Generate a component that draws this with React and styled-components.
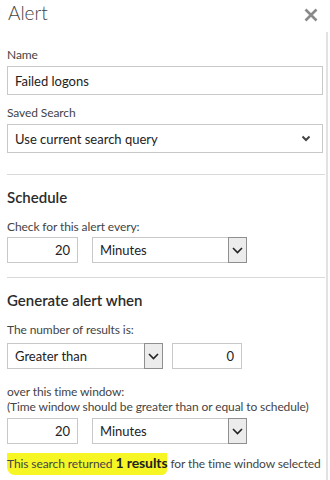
import React from "react";
import styled, { createGlobalStyle } from "styled-components";

const GlobalStyle = createGlobalStyle`
  html, body {
    margin: 0;
    padding: 0;
    background: #fff;
  }
  body {
    font-family: "Lato", "Open Sans", sans-serif;
    color: #333;
  }
`;

const Panel = styled.div`
  width: 330px;
  height: 480px;
  overflow: hidden;
  background: #fff;
`;

const Header = styled.div`
  display: flex;
  justify-content: space-between;
  align-items: flex-start;
  height: 32px;
  padding: 0 11px 0 8px;
  box-sizing: border-box;
`;

const Title = styled.h1`
  margin: 0;
  font-size: 19px;
  line-height: 26px;
  font-weight: 300;
  color: #444;
`;

const CloseButton = styled.button`
  border: 0;
  background: none;
  padding: 0;
  margin-top: 8px;
  width: 15px;
  height: 15px;
  cursor: pointer;
  display: flex;
`;

const Body = styled.div`
  width: 328px;
  box-sizing: border-box;
  height: 448px;
  border-right: 2px solid #e2e2e2;
  padding: 15px 3px 0 7px;
`;

const Label = styled.div`
  font-size: 12px;
  letter-spacing: -0.1px;
  line-height: ${(p) => p.$lh || 16}px;
  color: #444;
  margin-top: ${(p) => p.$mt || 0}px;
`;

const Heading = styled.h2`
  margin: ${(p) => p.$mt}px 0 0;
  font-size: 15px;
  line-height: 20px;
  font-weight: 600;
  color: #2b2b2b;
`;

const Divider = styled.hr`
  border: 0;
  border-top: 1px solid #d9d9d9;
  margin: ${(p) => p.$mt}px 0 0;
  width: 318px;
`;

const TextBox = styled.div`
  box-sizing: border-box;
  width: ${(p) => p.$w || 316}px;
  height: ${(p) => p.$h || 26}px;
  margin-top: ${(p) => p.$mt || 0}px;
  border: 1px solid #c8c8c8;
  display: flex;
  align-items: center;
  justify-content: ${(p) => (p.$right ? "flex-end" : "flex-start")};
  padding: 0 7px;
  font-size: 13px;
  color: #222;
  flex-shrink: 0;
`;

const DropBox = styled(TextBox)`
  justify-content: space-between;
  padding-right: 11px;
`;

const Row = styled.div`
  display: flex;
  gap: ${(p) => p.$gap}px;
  margin-top: ${(p) => p.$mt}px;
`;

const ClassicSelect = styled.div`
  box-sizing: border-box;
  width: ${(p) => p.$w}px;
  height: 26px;
  border: 1px solid #c8c8c8;
  display: flex;
  align-items: stretch;
  font-size: 13px;
  color: #222;
`;

const SelectValue = styled.div`
  flex: 1;
  display: flex;
  align-items: center;
  padding-left: 7px;
`;

const ArrowBox = styled.div`
  width: 17px;
  border: 1px solid #8f8f8f;
  background: #ececec;
  display: flex;
  align-items: center;
  justify-content: center;
  margin: -1px -1px -1px 0;
`;

const Result = styled.div`
  margin-top: 10px;
  font-size: 12px;
  letter-spacing: -0.1px;
  line-height: 17px;
  color: #444;
  white-space: nowrap;
`;

const Highlight = styled.span`
  background: #f6f624;
  padding: 3px 0 4px;
  border-radius: 0 0 5px 8px;
`;

const Strong = styled.b`
  font-size: 14px;
  font-weight: 700;
  color: #222;
`;

function CloseIcon() {
  return (
    <svg width="14" height="14" viewBox="0 0 14 14">
      <path d="M1.5 1.5 L12.5 12.5 M12.5 1.5 L1.5 12.5" stroke="#8a8a8a" strokeWidth="2.6" />
    </svg>
  );
}

function Chevron({ bold }) {
  return bold ? (
    <svg width="10" height="7" viewBox="0 0 10 7">
      <path d="M1.5 1.5 L5 5 L8.5 1.5" fill="none" stroke="#444" strokeWidth="2" />
    </svg>
  ) : (
    <svg width="11" height="7" viewBox="0 0 11 7">
      <path d="M1 1 L5.5 5.5 L10 1" fill="none" stroke="#222" strokeWidth="1.6" />
    </svg>
  );
}

function Select({ width, value }) {
  return (
    <ClassicSelect $w={width}>
      <SelectValue>{value}</SelectValue>
      <ArrowBox>
        <Chevron />
      </ArrowBox>
    </ClassicSelect>
  );
}

export default function App() {
  return (
    <Panel>
      <GlobalStyle />
      <Header>
        <Title>Alert</Title>
        <CloseButton aria-label="Close">
          <CloseIcon />
        </CloseButton>
      </Header>
      <Body>
        <Label>Name</Label>
        <TextBox $mt={3} $h={29}>Failed logons</TextBox>

        <Label $mt={10}>Saved Search</Label>
        <DropBox $mt={3} $h={29}>
          <span>Use current search query</span>
          <Chevron bold />
        </DropBox>

        <Divider $mt={21} />
        <Heading $mt={12}>Schedule</Heading>
        <Label $mt={12}>Check for this alert every:</Label>
        <Row $gap={14} $mt={2}>
          <TextBox $w={71} $right>20</TextBox>
          <Select width={155} value="Minutes" />
        </Row>

        <Divider $mt={14} />
        <Heading $mt={12}>Generate alert when</Heading>
        <Label $mt={12}>The number of results is:</Label>
        <Row $gap={9} $mt={5}>
          <Select width={156} value="Greater than" />
          <TextBox $w={70} $right>0</TextBox>
        </Row>

        <Label $mt={15} $lh={15}>
          over this time window:
          <br />
          (Time window should be greater than or equal to schedule)
        </Label>
        <Row $gap={14} $mt={4}>
          <TextBox $w={71} $right>20</TextBox>
          <Select width={155} value="Minutes" />
        </Row>

        <Result>
          <Highlight>
            This search returned <Strong>1 results</Strong>
          </Highlight>{" "}
          for the time window selected
        </Result>
      </Body>
    </Panel>
  );
}
